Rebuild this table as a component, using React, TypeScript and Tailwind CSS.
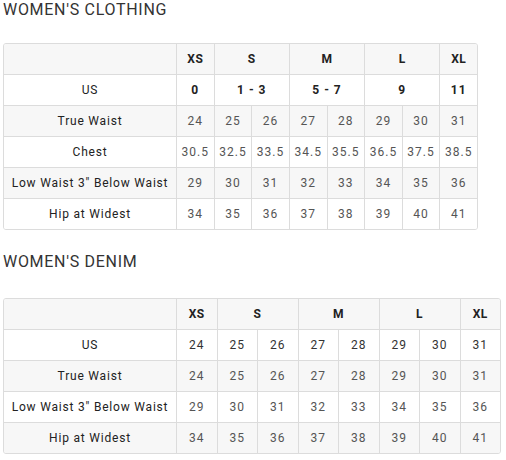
import React from 'react'

type Cell = { text: string; span?: number }

const sizes: Cell[] = [
  { text: 'XS' },
  { text: 'S', span: 2 },
  { text: 'M', span: 2 },
  { text: 'L', span: 2 },
  { text: 'XL' },
]

const clothing = {
  us: [
    { text: '0' },
    { text: '1 - 3', span: 2 },
    { text: '5 - 7', span: 2 },
    { text: '9', span: 2 },
    { text: '11' },
  ] as Cell[],
  usBold: true,
  rows: [
    { label: 'True Waist', values: ['24', '25', '26', '27', '28', '29', '30', '31'] },
    { label: 'Chest', values: ['30.5', '32.5', '33.5', '34.5', '35.5', '36.5', '37.5', '38.5'] },
    { label: 'Low Waist 3" Below Waist', values: ['29', '30', '31', '32', '33', '34', '35', '36'] },
    { label: 'Hip at Widest', values: ['34', '35', '36', '37', '38', '39', '40', '41'] },
  ],
}

const denim = {
  us: ['24', '25', '26', '27', '28', '29', '30', '31'].map((t) => ({ text: t })) as Cell[],
  usBold: false,
  rows: [
    { label: 'True Waist', values: ['24', '25', '26', '27', '28', '29', '30', '31'] },
    { label: 'Low Waist 3" Below Waist', values: ['29', '30', '31', '32', '33', '34', '35', '36'] },
    { label: 'Hip at Widest', values: ['34', '35', '36', '37', '38', '39', '40', '41'] },
  ],
}

const spanClass: Record<number, string> = { 1: 'col-span-1', 2: 'col-span-2' }

function SizeTable({ data, cols }: { data: typeof clothing; cols: string }) {
  const cell = 'h-[31px] flex items-center justify-center border-r border-b border-[#dcdcdc]'
  return (
    <div className="border border-[#dcdcdc] rounded-[3px] overflow-hidden">
      <div className={`grid ${cols} -mr-px -mb-px text-[12px] tracking-[1px]`}>
        {/* header */}
        <div className={`${cell} bg-[#f7f7f7]`} />
        {sizes.map((s) => (
          <div key={s.text} className={`${cell} ${spanClass[s.span ?? 1]} bg-[#f7f7f7] font-bold text-[#222] tracking-[0.5px]`}>
            {s.text}
          </div>
        ))}

        {/* US row */}
        <div className={`${cell} bg-white text-[#222] tracking-[0.8px]`}>US</div>
        {data.us.map((c, i) => (
          <div
            key={i}
            className={`${cell} ${spanClass[c.span ?? 1]} bg-white ${data.usBold ? 'font-bold text-[#222]' : 'text-[#333]'}`}
          >
            {c.text}
          </div>
        ))}

        {data.rows.map((r, ri) => {
          const bg = ri % 2 === 0 ? 'bg-[#f7f7f7]' : 'bg-white'
          return (
            <React.Fragment key={r.label}>
              <div className={`${cell} ${bg} text-[#222] tracking-[0.8px]`}>{r.label}</div>
              {r.values.map((v, vi) => (
                <div key={vi} className={`${cell} ${bg} text-[#555]`}>
                  {v}
                </div>
              ))}
            </React.Fragment>
          )
        })}
      </div>
    </div>
  )
}

export default function App() {
  return (
    <div className="bg-white min-h-screen px-[3px] font-['Roboto',sans-serif]">
      <h2 className="text-[16px] leading-[20px] tracking-[0.7px] text-[#333] uppercase">Women's Clothing</h2>
      <div className="w-[475px] mt-[23px]">
        <SizeTable data={clothing} cols="grid-cols-[173px_repeat(8,1fr)]" />
      </div>

      <h2 className="mt-[22px] text-[16px] leading-[20px] tracking-[0.7px] text-[#333] uppercase">Women's Denim</h2>
      <div className="w-[498px] mt-[26px]">
        <SizeTable data={denim} cols="grid-cols-[173px_repeat(8,1fr)]" />
      </div>
    </div>
  )
}
